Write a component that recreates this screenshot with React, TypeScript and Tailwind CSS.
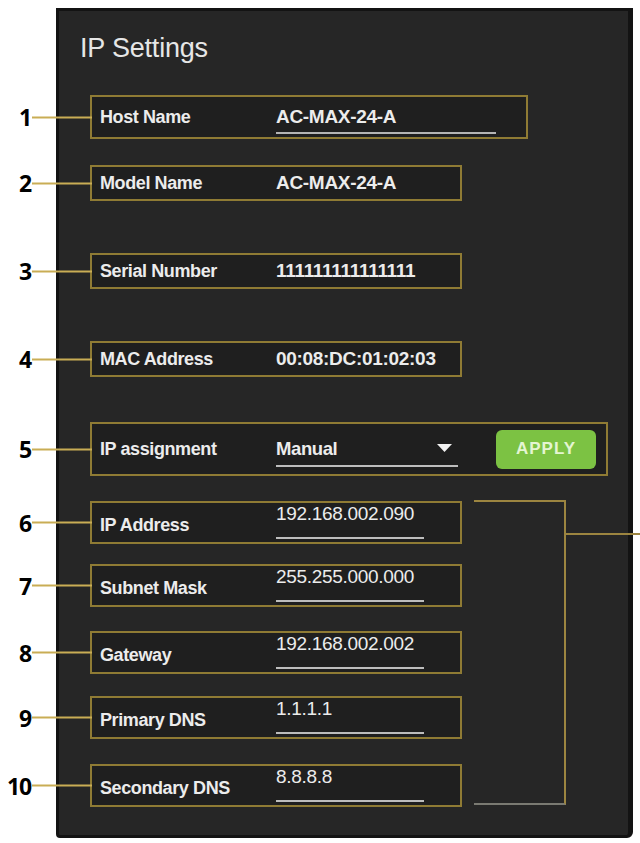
const GOLD = 'border-[#8f7b34]'

type Row = {
  n: number
  label: string
  value: string
  kind: 'plain' | 'host' | 'ip' | 'assign'
  gap: string
}

const rows: Row[] = [
  { n: 1, label: 'Host Name', value: 'AC-MAX-24-A', kind: 'host', gap: 'mt-[32px]' },
  { n: 2, label: 'Model Name', value: 'AC-MAX-24-A', kind: 'plain', gap: 'mt-[26px]' },
  { n: 3, label: 'Serial Number', value: '111111111111111', kind: 'plain', gap: 'mt-[52px]' },
  { n: 4, label: 'MAC Address', value: '00:08:DC:01:02:03', kind: 'plain', gap: 'mt-[52px]' },
  { n: 5, label: 'IP assignment', value: 'Manual', kind: 'assign', gap: 'mt-[45px]' },
  { n: 6, label: 'IP Address', value: '192.168.002.090', kind: 'ip', gap: 'mt-[25px]' },
  { n: 7, label: 'Subnet Mask', value: '255.255.000.000', kind: 'ip', gap: 'mt-[20px]' },
  { n: 8, label: 'Gateway', value: '192.168.002.002', kind: 'ip', gap: 'mt-[24px]' },
  { n: 9, label: 'Primary DNS', value: '1.1.1.1', kind: 'ip', gap: 'mt-[22px]' },
  { n: 10, label: 'Secondary DNS', value: '8.8.8.8', kind: 'ip', gap: 'mt-[25px]' },
]

function Callout({ n }: { n: number }) {
  return (
    <div className="absolute right-full top-1/2 flex -translate-y-1/2 items-center">
      <span className="font-['Open_Sans',sans-serif] text-[23px] leading-none font-bold tracking-tighter text-black">
        {n}
      </span>
      <span className="ml-[1px] h-[2px] w-[60px] bg-[#c9ad55]" />
    </div>
  )
}

function Label({ text, className = '' }: { text: string; className?: string }) {
  return (
    <span className={`w-[176px] shrink-0 text-[18px] leading-5 font-bold tracking-[-0.4px] text-[#ececec] ${className}`}>
      {text}
    </span>
  )
}

function SettingRow({ row }: { row: Row }) {
  if (row.kind === 'assign') {
    return (
      <div className={`relative ${row.gap} flex h-[54px] w-[518px] items-center border-2 ${GOLD} bg-[#1f1f1f] pl-[8px]`}>
        <Callout n={row.n} />
        <Label text={row.label} />
        <div className="relative flex h-full w-[182px] items-center">
          <span className="text-[18.5px] leading-5 font-bold tracking-[-0.4px] text-[#ececec]">{row.value}</span>
          <svg className="absolute top-[20px] right-[6px]" width="15" height="8" viewBox="0 0 15 8">
            <path d="M0 0 H15 L7.5 8 Z" fill="#f2f2f2" />
          </svg>
          <span className="absolute right-0 bottom-[7px] left-0 h-[2px] bg-[#bdbdbd]" />
        </div>
        <button className="ml-[38px] h-[39px] w-[100px] rounded-md bg-[#7cc243] text-[17px] font-bold tracking-[1px] text-[#e4f5d2]">
          APPLY
        </button>
      </div>
    )
  }

  if (row.kind === 'ip') {
    return (
      <div className={`relative ${row.gap} flex h-[43px] w-[372px] border-2 ${GOLD} bg-[#1f1f1f] pl-[8px]`}>
        <Callout n={row.n} />
        <Label text={row.label} className="self-center pt-[5px]" />
        <div className="flex w-[148px] flex-col pt-[1px]">
          <span className="text-[19px] leading-5 tracking-[-0.3px] text-[#ececec]">{row.value}</span>
          <span className="mt-[13px] h-[2px] bg-[#bdbdbd]" />
        </div>
      </div>
    )
  }

  if (row.kind === 'host') {
    return (
      <div className={`relative ${row.gap} flex h-[44px] w-[438px] items-center border-2 ${GOLD} bg-[#1f1f1f] pl-[8px]`}>
        <Callout n={row.n} />
        <Label text={row.label} />
        <div className="relative flex h-full w-[220px] items-center">
          <span className="text-[19px] leading-5 font-bold tracking-[-0.3px] text-[#ececec]">{row.value}</span>
          <span className="absolute right-0 bottom-[3px] left-0 h-[2px] bg-[#b5b5b5]" />
        </div>
      </div>
    )
  }

  return (
    <div className={`relative ${row.gap} flex h-[36px] w-[372px] items-center border-2 ${GOLD} bg-[#1f1f1f] pl-[8px]`}>
      <Callout n={row.n} />
      <Label text={row.label} />
      <span className="text-[19px] leading-5 font-bold tracking-[-0.3px] text-[#ececec]">{row.value}</span>
    </div>
  )
}

export default function App() {
  return (
    <div className="h-[843px] w-[640px] overflow-hidden bg-white pt-[8px] pl-[56px] font-['Liberation_Sans',Arial,sans-serif]">
      <div className="relative h-[830px] w-[577px] rounded-br-md rounded-bl-sm border-[3px] border-r-[5px] border-[#131313] bg-[#262626]">
        <h1 className="pt-[22px] pl-[21px] text-[27px] leading-[30px] tracking-[-0.2px] text-[#e6e6e6]">IP Settings</h1>

        <div className="flex flex-col items-start pl-[31px]">
          {rows.map((row) => (
            <SettingRow key={row.n} row={row} />
          ))}
        </div>

        {/* bracket grouping the static address fields */}
        <div className="absolute top-[489px] left-[415px] h-[305px] w-[92px] border-t-2 border-r-2 border-b-2 border-t-[#9c8540] border-r-[#9c8540] border-b-[#7a7a72]" />
        <div className="absolute top-[522px] left-[505px] h-[2px] w-[90px] bg-[#9c8540]" />
      </div>
    </div>
  )
}
